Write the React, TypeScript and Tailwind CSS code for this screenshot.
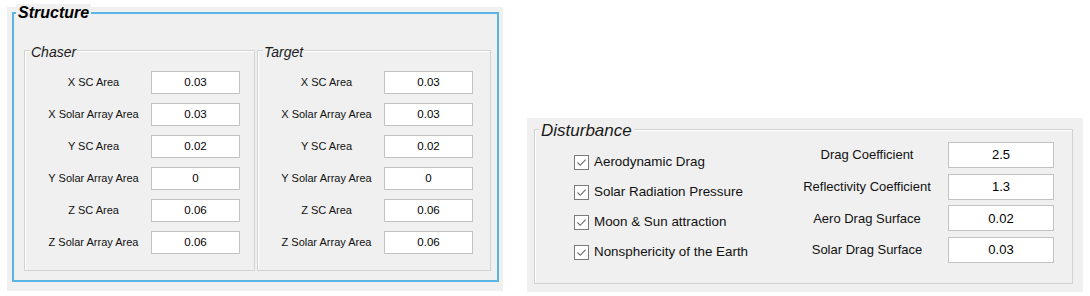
import React from "react";

const F = { fontFamily: '"Liberation Sans", Arial, sans-serif' };

function Field({ value, cls }: { value: string; cls: string }) {
  return (
    <div
      className={`flex items-center justify-center bg-white border border-[#c3c3c3] text-black ${cls}`}
    >
      {value}
    </div>
  );
}

function Group({
  title,
  rows,
  width,
}: {
  title: string;
  rows: [string, string][];
  width: string;
}) {
  return (
    <div
      className={`relative h-[221px] ${width} border border-[#d2d2d2] shadow-[inset_1px_1px_0_#ffffff]`}
    >
      <span className="absolute -top-[7px] left-[5px] px-[1px] bg-[#f0f0f0] text-[14px] leading-[16px] italic text-[#1a1a1a]">
        {title}
      </span>
      <div className="flex flex-col gap-[9px] pt-[20px] pl-[11px]">
        {rows.map(([l, v]) => (
          <div key={l} className="flex items-center h-[23px]">
            <div className="w-[115px] text-center text-[11px] text-[#111]">{l}</div>
            <Field value={v} cls="w-[89px] h-[23px] text-[11.5px]" />
          </div>
        ))}
      </div>
    </div>
  );
}

function Check({ label }: { label: string }) {
  return (
    <div className="flex items-center h-[20px]">
      <div className="w-[15px] h-[15px] border border-[#7a7a7a] bg-white flex items-center justify-center">
        <svg width="13" height="13" viewBox="0 0 13 13">
          <polyline
            points="2.5,6.5 5.2,9.3 10.6,3.6"
            fill="none"
            stroke="#6a6a6a"
            strokeWidth="1.1"
          />
        </svg>
      </div>
      <span className="ml-[5px] text-[13.4px] text-[#111]">{label}</span>
    </div>
  );
}

export default function App() {
  const rows: [string, string][] = [
    ["X SC Area", "0.03"],
    ["X Solar Array Area", "0.03"],
    ["Y SC Area", "0.02"],
    ["Y Solar Array Area", "0"],
    ["Z SC Area", "0.06"],
    ["Z Solar Array Area", "0.06"],
  ];
  const right: [string, string][] = [
    ["Drag Coefficient", "2.5"],
    ["Reflectivity Coefficient", "1.3"],
    ["Aero Drag Surface", "0.02"],
    ["Solar Drag Surface", "0.03"],
  ];
  return (
    <div className="w-[1090px] h-[296px] bg-white flex items-start overflow-hidden" style={F}>
      {/* Structure panel */}
      <div className="ml-[7px] mt-[7px] w-[496px] h-[284px] bg-[#f0f0f0] pt-[5px] pl-[5px]">
        <div className="relative w-[487px] h-[270px] border-2 border-[#5bb5e4]">
          <span className="absolute -top-[10px] left-[2px] px-[2px] bg-[#f0f0f0] text-[16px] leading-[18px] font-bold italic text-black">
            Structure
          </span>
          <div className="flex gap-[2px] pt-[36px] pl-[10px]">
            <Group title="Chaser" rows={rows} width="w-[231px]" />
            <Group title="Target" rows={rows} width="w-[234px]" />
          </div>
        </div>
      </div>

      {/* Disturbance panel */}
      <div className="ml-[24px] mt-[118px] w-[556px] h-[174px] bg-[#f0f0f0] pt-[11px] pl-[7px]">
        <div className="relative w-[539px] h-[155px] border border-[#d2d2d2] shadow-[inset_1px_1px_0_#ffffff] flex">
          <span className="absolute -top-[9px] left-[4px] px-[2px] bg-[#f0f0f0] text-[17px] leading-[20px] italic text-[#1a1a1a]">
            Disturbance
          </span>
          <div className="flex flex-col gap-[10px] pt-[22px] pl-[39px]">
            <Check label="Aerodynamic Drag" />
            <Check label="Solar Radiation Pressure" />
            <Check label="Moon & Sun attraction" />
            <Check label="Nonsphericity of the Earth" />
          </div>
          <div className="ml-auto mr-[18px] flex flex-col gap-[5.7px] pt-[12px]">
            {right.map(([l, v]) => (
              <div key={l} className="flex items-center h-[26px]">
                <div className="w-[162px] text-center text-[13px] text-[#111]">{l}</div>
                <Field value={v} cls="w-[106px] h-[26px] text-[13px]" />
              </div>
            ))}
          </div>
        </div>
      </div>
    </div>
  );
}
